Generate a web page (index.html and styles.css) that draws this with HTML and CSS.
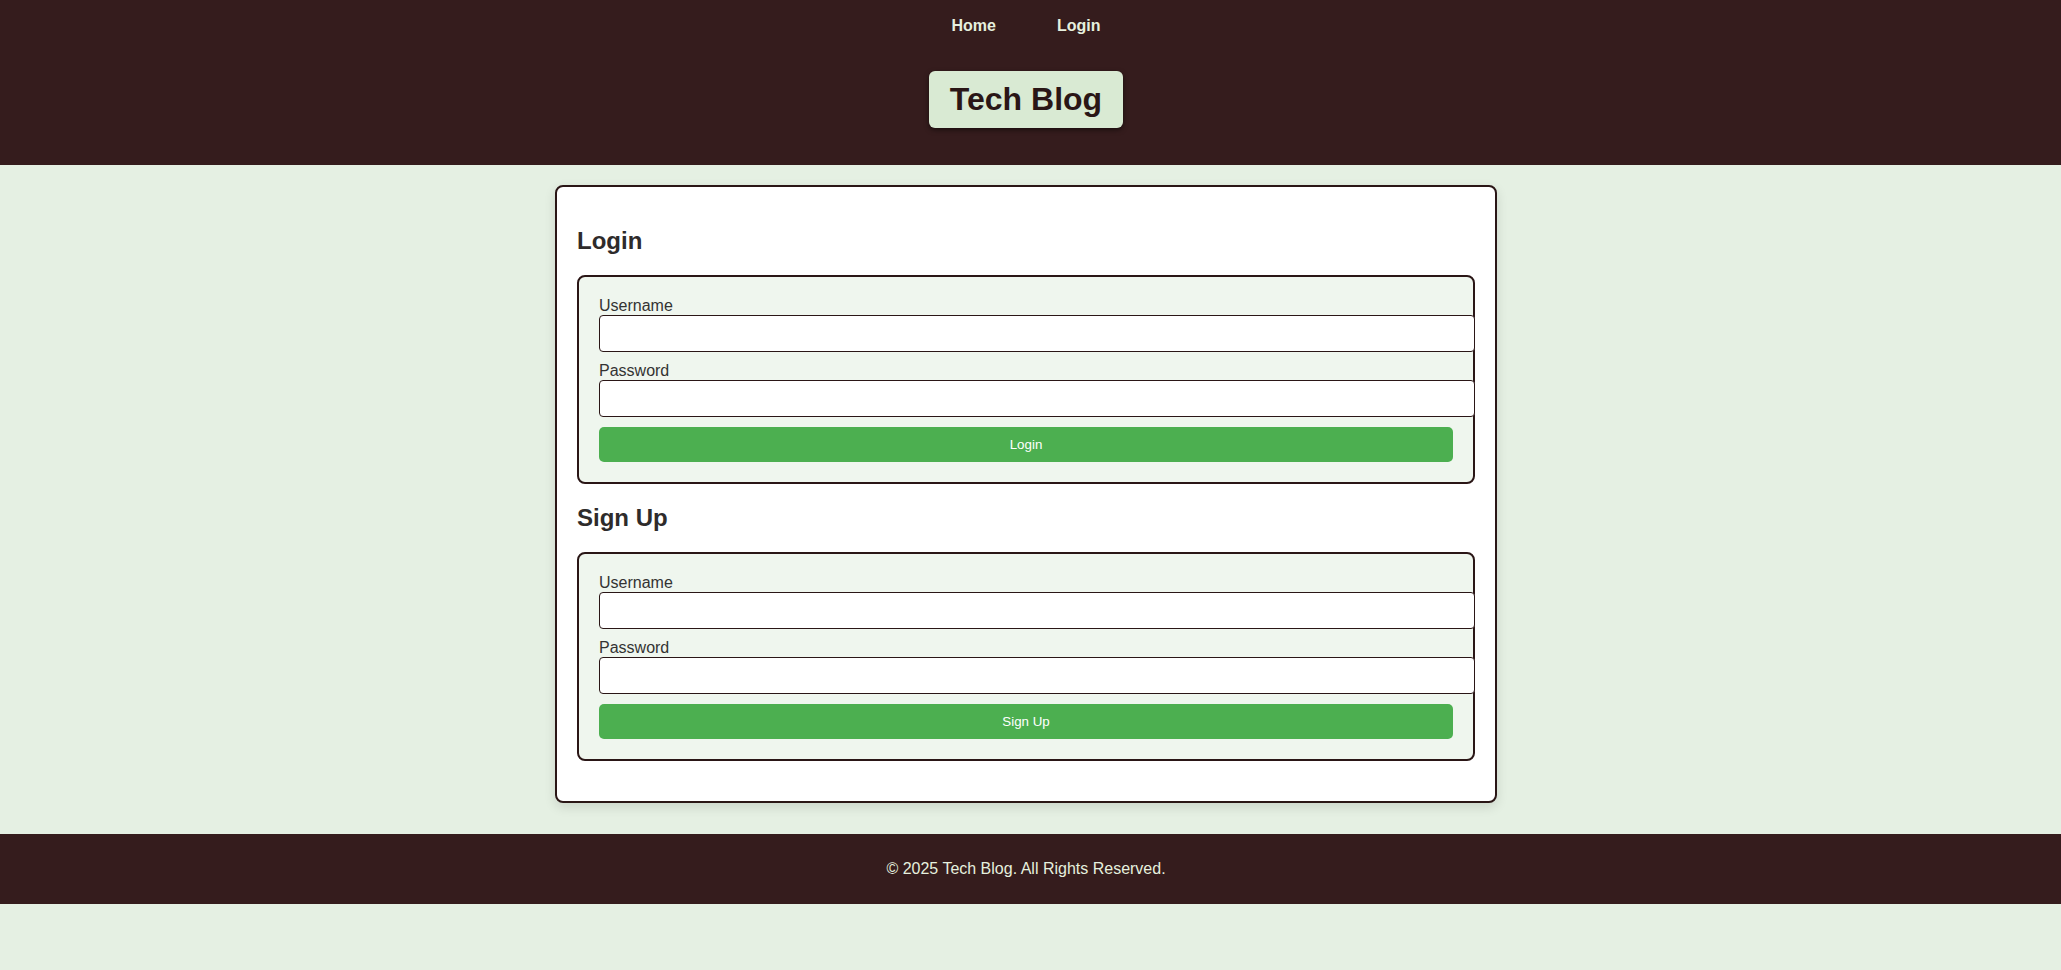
FILE: index.html
```html
<!DOCTYPE html>
<html lang="en">
<head>
<meta charset="utf-8">
<title>Tech Blog</title>
<link rel="stylesheet" href="styles.css">
</head>
<body>
<header class="site-header">
  <nav class="nav">
    <a class="nav-link" href="#">Home</a>
    <a class="nav-link" href="#">Login</a>
  </nav>
  <h1 class="brand">Tech Blog</h1>
</header>
<main class="main">
  <section class="card">
    <h2 class="card-title">Login</h2>
    <form class="auth-form">
      <label class="field-label">Username</label>
      <input class="field-input" type="text">
      <label class="field-label">Password</label>
      <input class="field-input" type="password">
      <button class="submit-btn" type="button">Login</button>
    </form>
    <h2 class="card-title">Sign Up</h2>
    <form class="auth-form">
      <label class="field-label">Username</label>
      <input class="field-input" type="text">
      <label class="field-label">Password</label>
      <input class="field-input" type="password">
      <button class="submit-btn" type="button">Sign Up</button>
    </form>
  </section>
</main>
<footer class="site-footer">
  <p class="footer-text">© 2025 Tech Blog. All Rights Reserved.</p>
</footer>
</body>
</html>
```

FILE: styles.css
```css
html, body {
  margin: 0;
  padding: 0;
}
body {
  background: #e5f0e3;
  font-family: "Liberation Sans", Arial, sans-serif;
  color: #333;
}
.site-header {
  background: #351c1d;
  padding: 17px 9px 0 0;
  height: 148px;
  display: flex;
  flex-direction: column;
  align-items: center;
}
.nav {
  display: flex;
  gap: 61px;
}
.nav-link {
  color: #e6f0df;
  font-weight: bold;
  font-size: 16px;
  text-decoration: none;
  line-height: 18px;
}
.brand {
  margin: 36px 0 0 0;
  background: #d9ead3;
  color: #2a1616;
  font-size: 32px;
  line-height: 37px;
  padding: 10px 21px;
  border-radius: 6px;
  box-shadow: 0 2px 5px rgba(0,0,0,0.5);
}
.main {
  padding: 20px 9px 31px 0;
  display: flex;
  justify-content: center;
}
.card {
  width: 898px;
  background: #fff;
  border: 2px solid #2a1616;
  border-radius: 8px;
  padding: 20px;
  box-shadow: 0 4px 12px rgba(0,0,0,0.12);
}
.card-title {
  font-size: 24px;
  margin: 20px 0;
  color: #2e2b2b;
}
.auth-form {
  background: #eff6ee;
  border: 2px solid #2a1616;
  border-radius: 8px;
  padding: 20px;
  margin: 20px 0;
}
.field-label {
  display: block;
  font-size: 16px;
  line-height: 18px;
  color: #333;
}
.field-input {
  display: block;
  width: 100%;
  padding: 10px;
  margin: 0 0 10px 0;
  border: 1px solid #2a1616;
  border-radius: 4px;
  font-size: 13.33px;
  line-height: 15px;
  background: #fff;
  box-sizing: content-box;
}
.submit-btn {
  display: block;
  width: 100%;
  padding: 10px;
  border: none;
  border-radius: 5px;
  background: #4caf50;
  color: #fff;
  font-family: "Liberation Sans", Arial, sans-serif;
  font-size: 13.33px;
  line-height: 15px;
}
.site-footer {
  background: #351c1d;
  padding: 25px 9px 26px 0;
  text-align: center;
}
.footer-text {
  margin: 0;
  color: #e6f0df;
  font-size: 16px;
  line-height: 19px;
}
```
